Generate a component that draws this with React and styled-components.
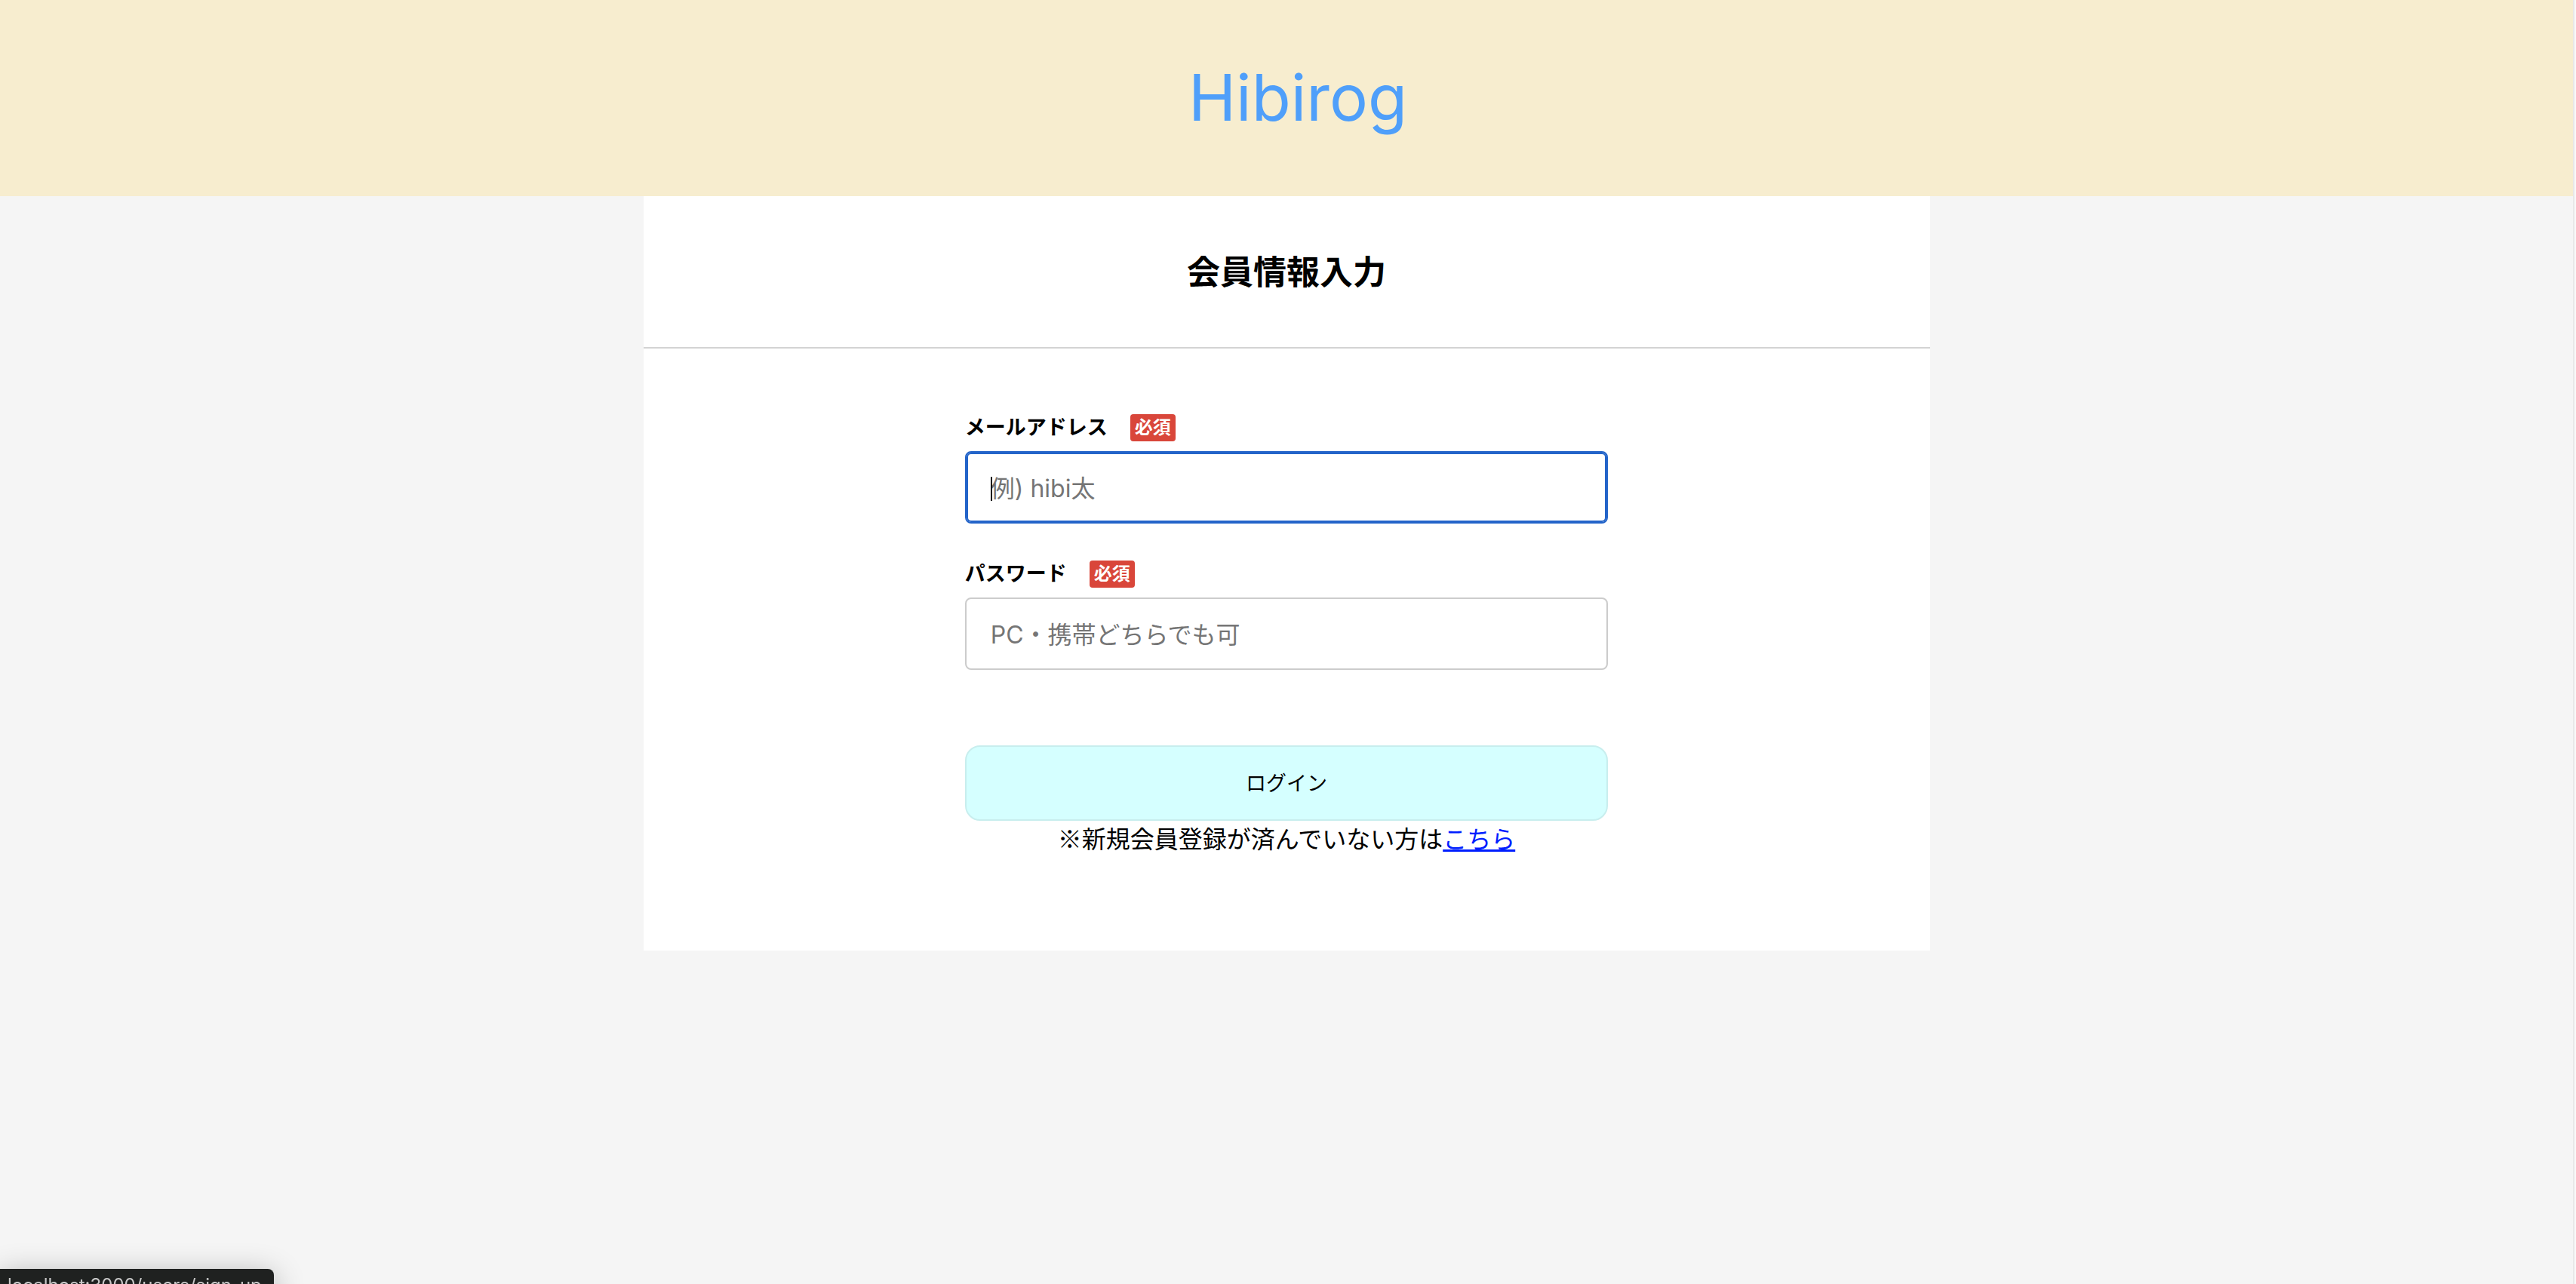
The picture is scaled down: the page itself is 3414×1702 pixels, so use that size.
import React from "react";
import styled, { createGlobalStyle, css } from "styled-components";

const GlobalStyle = createGlobalStyle`
  * {
    box-sizing: border-box;
  }
  body {
    margin: 0;
    background: #f5f5f5;
    color: #000;
    font-family: Inter, "Noto Sans CJK JP", sans-serif;
    font-size: 32px;
    line-height: 48px;
  }
`;

const Page = styled.div`
  min-height: 100vh;
  padding-right: 4px;
  background: linear-gradient(to left, #fafafa 2px, #e8e8e8 2px, #e8e8e8 4px, transparent 4px);
`;

const Header = styled.header`
  display: flex;
  align-items: center;
  justify-content: center;
  height: 260px;
  padding-left: 30px;
  background: #f7edcf;
`;

const Brand = styled.a`
  color: #4f9ffa;
  font-size: 85px;
  line-height: 120px;
  text-decoration: none;
`;

const Card = styled.main`
  width: 50%;
  margin: 0 auto;
  padding-bottom: 128px;
  background: #fff;
`;

const Title = styled.h1`
  margin: 0;
  padding: 69px 0 67px;
  border-bottom: 2px solid #d3d3d3;
  font-size: 44px;
  font-weight: 700;
  line-height: 64px;
  text-align: center;
`;

const Form = styled.form`
  display: flex;
  flex-direction: column;
  width: 50%;
  margin: 0 auto;
  padding-top: 85px;
`;

const Field = styled.div`
  margin-bottom: 47px;
`;

const LabelRow = styled.div`
  display: flex;
  align-items: center;
  gap: 30px;
  height: 40px;
  margin-bottom: 11px;
`;

const Label = styled.label`
  font-size: 27px;
  font-weight: 700;
  line-height: 40px;
`;

const Required = styled.span`
  padding: 0 6px;
  border-radius: 4px;
  background: #d9463a;
  color: #fff;
  font-size: 24px;
  font-weight: 700;
  line-height: 36px;
`;

const InputBox = styled.div`
  position: relative;
`;

const Input = styled.input`
  display: block;
  width: 100%;
  height: 96px;
  padding: 2px 32px 0;
  border: 2px solid #ccc;
  border-radius: 8px;
  outline: none;
  background: #fff;
  color: #000;
  font: inherit;

  &::placeholder {
    color: #757575;
    opacity: 1;
  }

  ${({ $active }) =>
    $active &&
    css`
      border-color: #2364c9;
      box-shadow: inset 0 0 0 2px #2364c9;
      caret-color: transparent;
    `}
`;

const Caret = styled.span`
  position: absolute;
  top: 34px;
  left: 34px;
  width: 2px;
  height: 32px;
  background: #000;
`;

const Submit = styled.button`
  height: 100px;
  margin-top: 53px;
  padding: 0 0 4px;
  border: 2px solid #c8eeee;
  border-radius: 20px;
  background: #d5ffff;
  color: #000;
  font-family: inherit;
  font-size: 27px;
`;

const Note = styled.p`
  margin: 0;
  font-family: "Noto Sans CJK JP", sans-serif;
  line-height: 44px;
  text-align: center;
`;

const NoteLink = styled.a`
  color: #001eff;
`;

const StatusBubble = styled.div`
  position: fixed;
  bottom: -24px;
  left: 0;
  padding: 4px 16px 4px 10px;
  border-radius: 0 8px 8px 0;
  background: #1f2120;
  box-shadow: 0 8px 40px rgba(0, 0, 0, 0.3);
  color: #c8c8c8;
  font-size: 24px;
  line-height: 36px;
`;

function TextField({ id, label, type, placeholder, active }) {
  return (
    <Field>
      <LabelRow>
        <Label htmlFor={id}>{label}</Label>
        <Required>必須</Required>
      </LabelRow>
      <InputBox>
        <Input id={id} type={type} placeholder={placeholder} $active={active} autoFocus={active} />
        {active && <Caret aria-hidden="true" />}
      </InputBox>
    </Field>
  );
}

export default function App() {
  return (
    <>
      <GlobalStyle />
      <Page lang="ja">
        <Header>
          <Brand href="#">Hibirog</Brand>
        </Header>
        <Card>
          <Title>会員情報入力</Title>
          <Form onSubmit={(event) => event.preventDefault()}>
            <TextField id="email" label="メールアドレス" type="email" placeholder="例) hibi太" active />
            <TextField id="password" label="パスワード" type="password" placeholder="PC・携帯どちらでも可" />
            <Submit type="submit">ログイン</Submit>
            <Note>
              ※新規会員登録が済んでいない方は<NoteLink href="#sign_up">こちら</NoteLink>
            </Note>
          </Form>
        </Card>
        <StatusBubble>localhost:3000/users/sign_up</StatusBubble>
      </Page>
    </>
  );
}
